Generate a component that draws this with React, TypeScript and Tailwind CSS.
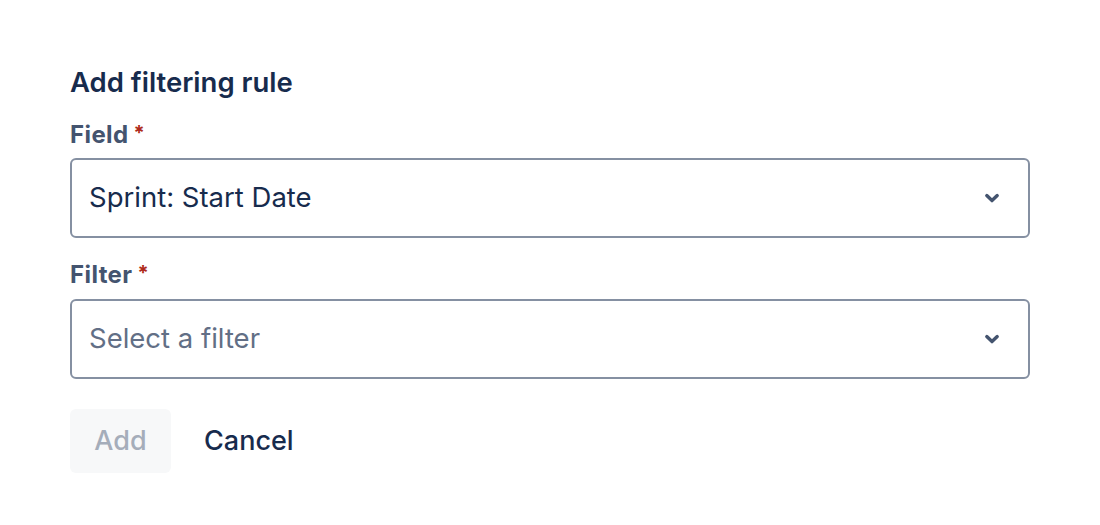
import React from "react";

function Chevron() {
  return (
    <svg width="24" height="24" viewBox="0 0 24 24" className="shrink-0">
      <path d="M6.8 9.6 12 14.6 17.2 9.6" fill="none" stroke="#44546F" strokeWidth="3.4" strokeLinecap="round" strokeLinejoin="round" />
    </svg>
  );
}

function Select({ value, placeholder }: { value?: string; placeholder?: string }) {
  return (
    <div className="h-[80px] w-full rounded-[6px] border-2 border-[#8590A2] flex items-center pl-[17px] pr-[24px]">
      <span className={"flex-1 text-[27.5px] " + (value ? "text-[#172B4D]" : "text-[#626F86]")}>
        {value ?? placeholder}
      </span>
      <Chevron />
    </div>
  );
}

function Label({ children }: { children: React.ReactNode }) {
  return (
    <div className="flex items-start text-[24px] font-bold tracking-[0.4px] text-[#44546F] leading-[28px]">
      {children}
      <span className="ml-[5px] text-[20px] leading-[24px] text-[#AE2A19]">*</span>
    </div>
  );
}

export default function App() {
  return (
    <div className="w-[1100px] h-[525px] bg-white" style={{ fontFamily: "Inter, 'Noto Sans', sans-serif" }}>
      <div className="pt-[62px] pl-[70px] w-[1030px]">
        <h1 className="text-[27.5px] font-semibold text-[#172B4D] leading-[40px]">Add filtering rule</h1>
        <div className="mt-[19px]">
          <Label>Field</Label>
        </div>
        <div className="mt-[9px]">
          <Select value="Sprint: Start Date" />
        </div>
        <div className="mt-[23px]">
          <Label>Filter</Label>
        </div>
        <div className="mt-[10px]">
          <Select placeholder="Select a filter" />
        </div>
        <div className="mt-[30px] flex items-center gap-[8px]">
          <button className="h-[64px] w-[101px] rounded-[6px] bg-[#F7F8F9] text-[#A5ADBA] text-[27px] font-medium">Add</button>
          <button className="h-[64px] px-[25px] text-[#172B4D] text-[27px] font-medium">Cancel</button>
        </div>
      </div>
    </div>
  );
}
